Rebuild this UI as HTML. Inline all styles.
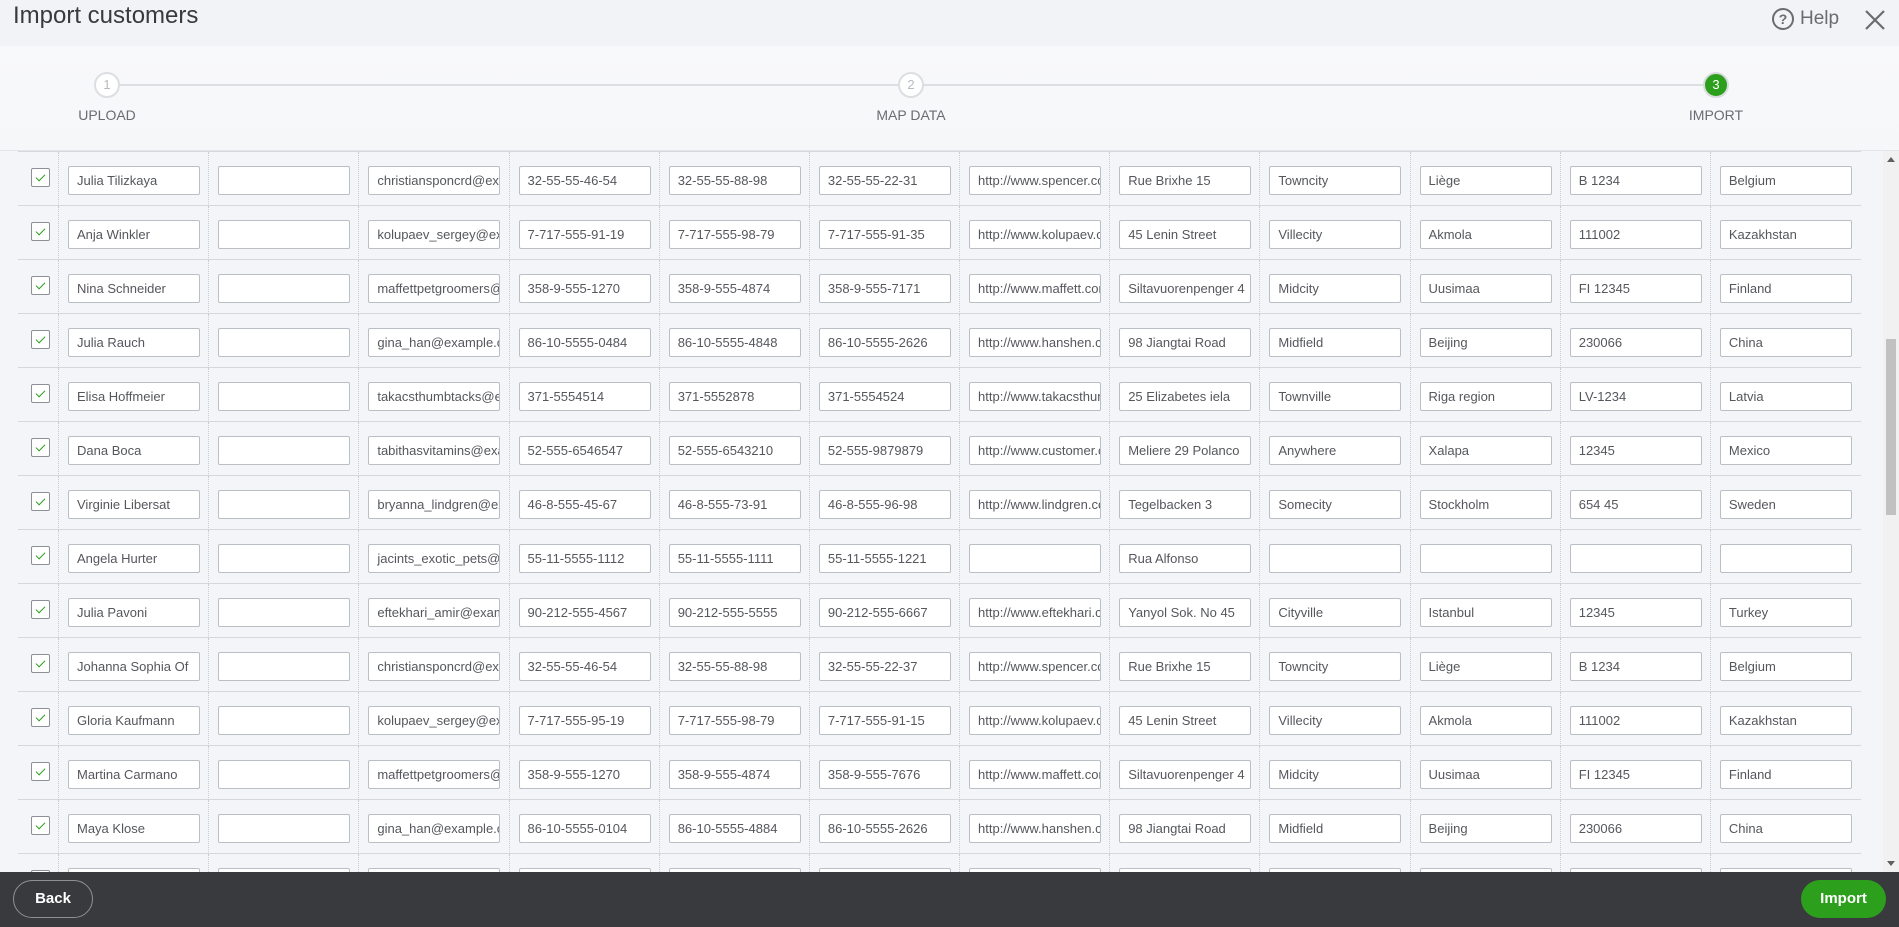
<!DOCTYPE html>
<html><head><meta charset="utf-8"><style>
*{box-sizing:border-box;margin:0;padding:0}
body{width:1899px;height:927px;overflow:hidden;background:#f4f5f8;font-family:"Liberation Sans",sans-serif;color:#393a3d;position:relative}
#hdr{position:absolute;left:0;top:0;width:1899px;height:46px;background:#f2f3f6}
#hdr h1{position:absolute;left:13px;top:2px;font-size:24px;font-weight:normal;color:#393a3d}
#help{position:absolute;left:1772px;top:8px;font-size:19px;color:#6b6c72;display:flex;align-items:center}
#help .q{width:22px;height:22px;border:2px solid #6b6c72;border-radius:50%;font-size:14px;font-weight:bold;text-align:center;line-height:18px;margin-right:6px}
#close{position:absolute;left:1864px;top:9px}
#steps{position:absolute;left:0;top:46px;width:1899px;height:105px;background:linear-gradient(#f8f9fb,#f6f7f9);border-bottom:1px solid #e3e5e8}
.line{position:absolute;left:107px;width:1609px;top:38px;height:2px;background:#dcdee2}
.c{position:absolute;top:26px;width:26px;height:26px;border-radius:50%;border:2px solid #dcdee2;background:#fff;color:#b8babe;font-size:13px;text-align:center;line-height:22px}
.c.g{background:#2ca01c;color:#fff;border-color:#d9dbdf}
.lbl{position:absolute;top:61px;font-size:14px;color:#6b6c72;transform:translateX(-50%)}
#tbl{position:absolute;left:18px;top:151px;width:1843px;height:721px;overflow:hidden}
.r{height:54px;border-top:1px solid #d4d7dc;display:flex}
.k{width:41px;height:54px;border-right:1px dotted #c9ccd1;position:relative}
.k i{position:absolute;left:13px;top:16px;width:19px;height:19px;border:1px solid #8d9096;background:#fff;border-radius:2px}
.k i:after{content:"";position:absolute;left:6px;top:3px;width:4px;height:8px;border:solid #2ca01c;border-width:0 1px 1px 0;transform:rotate(45deg)}
.d{width:150.2px;height:54px;border-right:1px dotted #c9ccd1;position:relative}
.d:last-child{border-right:none}
.d span{position:absolute;left:9px;top:14px;width:132px;height:29px;background:#fff;border:1px solid #babec5;border-radius:2px;font-size:13px;line-height:27px;padding-left:8px;white-space:nowrap;overflow:hidden;color:#55575c}
#sb{position:absolute;left:1883px;top:151px;width:16px;height:721px;background:#f1f1f1}
#sb .t{position:absolute;left:3px;top:188px;width:10px;height:176px;background:#c1c1c1}
#sb .a{position:absolute;left:4px;width:0;height:0;border-left:4px solid transparent;border-right:4px solid transparent}
#ft{position:absolute;left:0;top:872px;width:1899px;height:55px;background:#393a3d}
#back{position:absolute;left:13px;top:8px;width:80px;height:38px;border:1px solid #8d9096;border-radius:19px;color:#fff;font-weight:bold;font-size:15px;text-align:center;line-height:36px}
#imp{position:absolute;left:1801px;top:8px;width:85px;height:38px;background:#2ca01c;border-radius:19px;color:#fff;font-weight:bold;font-size:15px;text-align:center;line-height:38px}
</style></head><body>
<div id="hdr"><h1>Import customers</h1>
<div id="help"><span class="q">?</span>Help</div>
<svg id="close" width="22" height="22" viewBox="0 0 22 22"><path d="M2 2L20 20M20 2L2 20" stroke="#6b6c72" stroke-width="2.2"/></svg></div>
<div id="steps"><div class="line"></div>
<div class="c" style="left:94px">1</div><div class="lbl" style="left:107px">UPLOAD</div>
<div class="c" style="left:898px">2</div><div class="lbl" style="left:911px">MAP DATA</div>
<div class="c g" style="left:1703px">3</div><div class="lbl" style="left:1716px">IMPORT</div></div>
<div id="tbl">
<div class="r"><div class="k"><i></i></div><div class="d"><span>Julia Tilizkaya</span></div><div class="d"><span></span></div><div class="d"><span>christiansponcrd@example.com</span></div><div class="d"><span>32-55-55-46-54</span></div><div class="d"><span>32-55-55-88-98</span></div><div class="d"><span>32-55-55-22-31</span></div><div class="d"><span>http://www.spencer.com</span></div><div class="d"><span>Rue Brixhe 15</span></div><div class="d"><span>Towncity</span></div><div class="d"><span>Liège</span></div><div class="d"><span>B 1234</span></div><div class="d"><span>Belgium</span></div></div>
<div class="r"><div class="k"><i></i></div><div class="d"><span>Anja Winkler</span></div><div class="d"><span></span></div><div class="d"><span>kolupaev_sergey@example.com</span></div><div class="d"><span>7-717-555-91-19</span></div><div class="d"><span>7-717-555-98-79</span></div><div class="d"><span>7-717-555-91-35</span></div><div class="d"><span>http://www.kolupaev.com</span></div><div class="d"><span>45 Lenin Street</span></div><div class="d"><span>Villecity</span></div><div class="d"><span>Akmola</span></div><div class="d"><span>111002</span></div><div class="d"><span>Kazakhstan</span></div></div>
<div class="r"><div class="k"><i></i></div><div class="d"><span>Nina Schneider</span></div><div class="d"><span></span></div><div class="d"><span>maffettpetgroomers@example.com</span></div><div class="d"><span>358-9-555-1270</span></div><div class="d"><span>358-9-555-4874</span></div><div class="d"><span>358-9-555-7171</span></div><div class="d"><span>http://www.maffett.com</span></div><div class="d"><span>Siltavuorenpenger 4</span></div><div class="d"><span>Midcity</span></div><div class="d"><span>Uusimaa</span></div><div class="d"><span>FI 12345</span></div><div class="d"><span>Finland</span></div></div>
<div class="r"><div class="k"><i></i></div><div class="d"><span>Julia Rauch</span></div><div class="d"><span></span></div><div class="d"><span>gina_han@example.com</span></div><div class="d"><span>86-10-5555-0484</span></div><div class="d"><span>86-10-5555-4848</span></div><div class="d"><span>86-10-5555-2626</span></div><div class="d"><span>http://www.hanshen.com</span></div><div class="d"><span>98 Jiangtai Road</span></div><div class="d"><span>Midfield</span></div><div class="d"><span>Beijing</span></div><div class="d"><span>230066</span></div><div class="d"><span>China</span></div></div>
<div class="r"><div class="k"><i></i></div><div class="d"><span>Elisa Hoffmeier</span></div><div class="d"><span></span></div><div class="d"><span>takacsthumbtacks@example.com</span></div><div class="d"><span>371-5554514</span></div><div class="d"><span>371-5552878</span></div><div class="d"><span>371-5554524</span></div><div class="d"><span>http://www.takacsthumbtacks.com</span></div><div class="d"><span>25 Elizabetes iela</span></div><div class="d"><span>Townville</span></div><div class="d"><span>Riga region</span></div><div class="d"><span>LV-1234</span></div><div class="d"><span>Latvia</span></div></div>
<div class="r"><div class="k"><i></i></div><div class="d"><span>Dana Boca</span></div><div class="d"><span></span></div><div class="d"><span>tabithasvitamins@example.com</span></div><div class="d"><span>52-555-6546547</span></div><div class="d"><span>52-555-6543210</span></div><div class="d"><span>52-555-9879879</span></div><div class="d"><span>http://www.customer.com</span></div><div class="d"><span>Meliere 29 Polanco</span></div><div class="d"><span>Anywhere</span></div><div class="d"><span>Xalapa</span></div><div class="d"><span>12345</span></div><div class="d"><span>Mexico</span></div></div>
<div class="r"><div class="k"><i></i></div><div class="d"><span>Virginie Libersat</span></div><div class="d"><span></span></div><div class="d"><span>bryanna_lindgren@example.com</span></div><div class="d"><span>46-8-555-45-67</span></div><div class="d"><span>46-8-555-73-91</span></div><div class="d"><span>46-8-555-96-98</span></div><div class="d"><span>http://www.lindgren.com</span></div><div class="d"><span>Tegelbacken 3</span></div><div class="d"><span>Somecity</span></div><div class="d"><span>Stockholm</span></div><div class="d"><span>654 45</span></div><div class="d"><span>Sweden</span></div></div>
<div class="r"><div class="k"><i></i></div><div class="d"><span>Angela Hurter</span></div><div class="d"><span></span></div><div class="d"><span>jacints_exotic_pets@example.com</span></div><div class="d"><span>55-11-5555-1112</span></div><div class="d"><span>55-11-5555-1111</span></div><div class="d"><span>55-11-5555-1221</span></div><div class="d"><span></span></div><div class="d"><span>Rua Alfonso</span></div><div class="d"><span></span></div><div class="d"><span></span></div><div class="d"><span></span></div><div class="d"><span></span></div></div>
<div class="r"><div class="k"><i></i></div><div class="d"><span>Julia Pavoni</span></div><div class="d"><span></span></div><div class="d"><span>eftekhari_amir@example.com</span></div><div class="d"><span>90-212-555-4567</span></div><div class="d"><span>90-212-555-5555</span></div><div class="d"><span>90-212-555-6667</span></div><div class="d"><span>http://www.eftekhari.com</span></div><div class="d"><span>Yanyol Sok. No 45</span></div><div class="d"><span>Cityville</span></div><div class="d"><span>Istanbul</span></div><div class="d"><span>12345</span></div><div class="d"><span>Turkey</span></div></div>
<div class="r"><div class="k"><i></i></div><div class="d"><span>Johanna Sophia Of</span></div><div class="d"><span></span></div><div class="d"><span>christiansponcrd@example.com</span></div><div class="d"><span>32-55-55-46-54</span></div><div class="d"><span>32-55-55-88-98</span></div><div class="d"><span>32-55-55-22-37</span></div><div class="d"><span>http://www.spencer.com</span></div><div class="d"><span>Rue Brixhe 15</span></div><div class="d"><span>Towncity</span></div><div class="d"><span>Liège</span></div><div class="d"><span>B 1234</span></div><div class="d"><span>Belgium</span></div></div>
<div class="r"><div class="k"><i></i></div><div class="d"><span>Gloria Kaufmann</span></div><div class="d"><span></span></div><div class="d"><span>kolupaev_sergey@example.com</span></div><div class="d"><span>7-717-555-95-19</span></div><div class="d"><span>7-717-555-98-79</span></div><div class="d"><span>7-717-555-91-15</span></div><div class="d"><span>http://www.kolupaev.com</span></div><div class="d"><span>45 Lenin Street</span></div><div class="d"><span>Villecity</span></div><div class="d"><span>Akmola</span></div><div class="d"><span>111002</span></div><div class="d"><span>Kazakhstan</span></div></div>
<div class="r"><div class="k"><i></i></div><div class="d"><span>Martina Carmano</span></div><div class="d"><span></span></div><div class="d"><span>maffettpetgroomers@example.com</span></div><div class="d"><span>358-9-555-1270</span></div><div class="d"><span>358-9-555-4874</span></div><div class="d"><span>358-9-555-7676</span></div><div class="d"><span>http://www.maffett.com</span></div><div class="d"><span>Siltavuorenpenger 4</span></div><div class="d"><span>Midcity</span></div><div class="d"><span>Uusimaa</span></div><div class="d"><span>FI 12345</span></div><div class="d"><span>Finland</span></div></div>
<div class="r"><div class="k"><i></i></div><div class="d"><span>Maya Klose</span></div><div class="d"><span></span></div><div class="d"><span>gina_han@example.com</span></div><div class="d"><span>86-10-5555-0104</span></div><div class="d"><span>86-10-5555-4884</span></div><div class="d"><span>86-10-5555-2626</span></div><div class="d"><span>http://www.hanshen.com</span></div><div class="d"><span>98 Jiangtai Road</span></div><div class="d"><span>Midfield</span></div><div class="d"><span>Beijing</span></div><div class="d"><span>230066</span></div><div class="d"><span>China</span></div></div>
<div class="r"><div class="k"><i></i></div><div class="d"><span></span></div><div class="d"><span></span></div><div class="d"><span></span></div><div class="d"><span></span></div><div class="d"><span></span></div><div class="d"><span></span></div><div class="d"><span></span></div><div class="d"><span></span></div><div class="d"><span></span></div><div class="d"><span></span></div><div class="d"><span></span></div><div class="d"><span></span></div></div>
</div>
<div id="sb"><div class="a" style="top:6px;border-bottom:5px solid #606060"></div><div class="t"></div><div class="a" style="top:710px;border-top:5px solid #606060"></div></div>
<div id="ft"><div id="back">Back</div><div id="imp">Import</div></div>
</body></html>
